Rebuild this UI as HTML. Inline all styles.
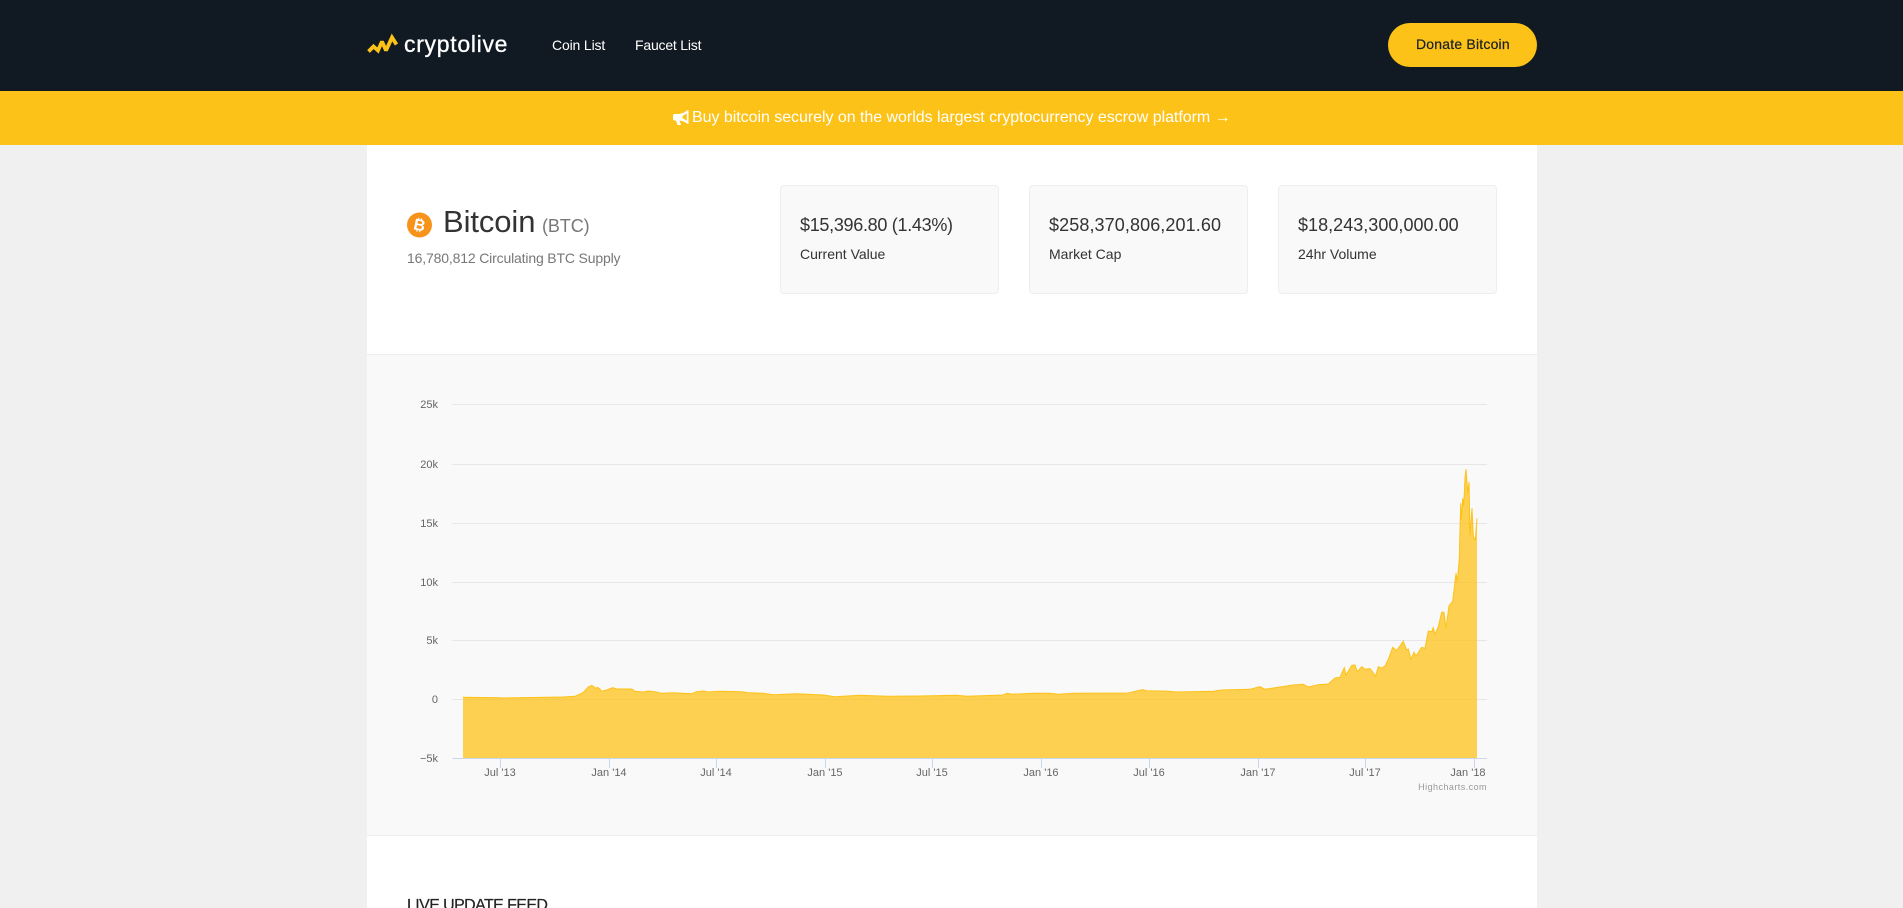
<!DOCTYPE html>
<html lang="en">
<head>
<meta charset="utf-8">
<title>Bitcoin (BTC) - cryptolive</title>
<style>
html,body{margin:0;padding:0;width:1903px;height:908px;overflow:hidden;background:#f0f0f0;font-family:"Liberation Sans",sans-serif;color:#333}
a{color:inherit;text-decoration:none}
#page{position:relative;width:1903px;height:908px;overflow:hidden;contain:paint}
.t{position:absolute;white-space:nowrap;line-height:1}
header{position:absolute;left:0;top:0;width:1903px;height:91px;background:#111a22}
.btn{position:absolute;left:1388px;top:23px;width:149px;height:44px;border-radius:22px;background:#fdc218}
.banner{position:absolute;left:0;top:91px;width:1903px;height:54px;background:#fdc218}
.panel{position:absolute;left:367px;top:145px;width:1170px;height:763px;background:#fff}
.chartwrap{position:absolute;left:367px;top:354px;width:1170px;height:482px;background:#f9f9f9;border-top:1px solid #eee;border-bottom:1px solid #eee;box-sizing:border-box}
.card{position:absolute;top:185px;width:219px;height:109px;box-sizing:border-box;background:#f9f9f9;border:1px solid #eee;border-radius:4px}
</style>
</head>
<body>
<div id="page">
<header>
<svg style="position:absolute;left:362px;top:28px" width="40" height="30" viewBox="362 28 40 30"><path d="M368.5 51.5L373.5 46.5L378 50.5L382 41.5L386 50.5L392 37.5L396.5 44.5" fill="none" stroke="#fdc218" stroke-width="3.8" stroke-linejoin="miter" stroke-miterlimit="2.2" stroke-linecap="butt"/></svg>
<a class="t" style="left:404px;top:33px;font-size:23px;color:#fff;letter-spacing:.7px;-webkit-text-stroke:.3px #fff">cryptolive</a>
<a class="t" style="left:552px;top:38px;font-size:14px;color:#fff;letter-spacing:-.15px">Coin List</a>
<a class="t" style="left:635px;top:38px;font-size:14px;color:#fff;letter-spacing:-.2px">Faucet List</a>
<a class="btn"></a>
<span class="t" style="left:1416px;top:37px;font-size:14px;color:#1a2026;letter-spacing:.2px;-webkit-text-stroke:.2px #1a2026">Donate Bitcoin</span>
</header>
<div class="banner">
<svg style="position:absolute;left:673px;top:18px" width="17" height="17" viewBox="0 0 17 17"><path d="M15.5 1L14 1.5C11 4 8 5 4.5 5H1.5C.7 5 0 5.7 0 6.5V10C0 10.8.7 11.5 1.5 11.5H3L4.5 16H8L6.5 11.6C9.5 11.8 12 12.8 14 14.6L15.5 15ZM13.8 4.2V11.8C12.5 10.7 11 9.8 9.5 9.2V6.8C11 6.2 12.5 5.3 13.8 4.2Z" fill="#fff" fill-rule="evenodd"/></svg>
<a class="t" style="left:692px;top:19px;font-size:16px;color:#fff;letter-spacing:-.04px">Buy bitcoin securely on the worlds largest cryptocurrency escrow platform →</a>
</div>
<main>
<div class="panel"></div>
<svg style="position:absolute;left:406px;top:212px" width="27" height="27" viewBox="0 0 27 27"><circle cx="13.5" cy="13" r="12.5" fill="#f7931a"/><text x="13.5" y="18.5" font-family="Liberation Sans" font-size="16" font-weight="700" fill="#fff" text-anchor="middle" transform="rotate(12 13.5 13)">B</text><path d="M13 5.6L12.6 7.6M15.8 6.2L15.4 8.2M11.2 17.6L10.8 19.6M14 18.2L13.6 20.2" stroke="#fff" stroke-width="1.1"/></svg>
<h1 class="t" style="margin:0;left:443px;top:206px;font-size:31px;font-weight:400;color:#333;letter-spacing:-.1px">Bitcoin</h1>
<span class="t" style="left:542px;top:217px;font-size:18px;color:#777;letter-spacing:-.1px">(BTC)</span>
<p class="t" style="margin:0;left:407px;top:251px;font-size:14px;color:#777;letter-spacing:-.16px">16,780,812 Circulating BTC Supply</p>
<div class="card" style="left:780px"></div>
<span class="t" style="left:800px;top:216px;font-size:18px;color:#333;letter-spacing:-.3px">$15,396.80 (1.43%)</span>
<span class="t" style="left:800px;top:247px;font-size:14px;color:#333;letter-spacing:0">Current Value</span>
<div class="card" style="left:1029px"></div>
<span class="t" style="left:1049px;top:216px;font-size:18px;color:#333;letter-spacing:.1px">$258,370,806,201.60</span>
<span class="t" style="left:1049px;top:247px;font-size:14px;color:#333;letter-spacing:0">Market Cap</span>
<div class="card" style="left:1278px"></div>
<span class="t" style="left:1298px;top:216px;font-size:18px;color:#333;letter-spacing:.03px">$18,243,300,000.00</span>
<span class="t" style="left:1298px;top:247px;font-size:14px;color:#333;letter-spacing:0">24hr Volume</span>
<div class="chartwrap"></div>
<svg style="position:absolute;left:367px;top:354px" width="1170" height="481" viewBox="367 354 1170 481" font-family="Liberation Sans">
<g stroke="#e6e6e6" stroke-width="1">
<path d="M452.5 404.5H1487M452.5 464.5H1487M452.5 523.5H1487M452.5 582.5H1487M452.5 640.5H1487M452.5 699.5H1487"/>
</g>
<path fill="#fdc218" fill-opacity=".75" d="M463 758V697.3L500 697.7L503 698L563 697L575 696.3L583 692.7L588 687.3L591.7 685.3L594 686.7L595.7 688.7L597 687.3L600 688.7L601.3 691.3L606.7 690L612.7 687.7L616.7 689L631.7 689L635 691.3L643.3 692L648.3 691L655 691.7L661.7 693.3L673.3 692.7L691.7 693.7L696.7 691.7L703.3 691L708.3 692L718.3 691.3L741.7 691.7L748.3 692.7L763.3 693.3L773.3 694.7L796.7 693.7L823.3 695L835 696.7L860 695.3L886.7 696.3L920 696L956.7 695.3L966.7 696.3L1003.3 695L1007.3 693.3L1011.7 694.3L1033.3 693.3L1050 693.3L1058.3 694.3L1073.3 693.3L1128.3 693L1135 691.3L1142.7 689.7L1146.7 690.7L1168.3 691.3L1176.7 692L1213.3 691.3L1221.7 690L1250 689.3L1260 686.7L1265 689.3L1280 687L1293.3 685L1303.3 684.3L1308.3 687L1318.3 684.7L1328.3 684L1335 678L1340 677.3L1344.3 667.7L1346 675L1351.7 665.3L1355 665L1357.3 671.7L1361.7 666.7L1365 669.3L1370 668.7L1375.7 676L1378.3 666.7L1381.7 668L1385 666L1388.3 659.3L1392.7 647.3L1396.7 650.7L1399 647.3L1403.3 641.3L1406.7 650L1408.3 649L1411 659.3L1414 652.3L1416 656L1421.7 647.3L1425 648.3L1428.3 631L1431.7 631.7L1433.3 627.7L1435 634.3L1438.3 626.7L1441.7 612.3L1444 612.3L1446 628.3L1449 605.7L1452.7 601.3L1456 573.3L1457.3 581.7L1459.3 558.3L1460.7 503.3L1461.3 520L1462.7 498.3L1463.7 506L1465 478L1466 469.3L1467.7 493L1469 482L1470 535L1472 508.3L1473.3 536.7L1475.3 540L1477 518.3V758Z"/>
<path fill="none" stroke="#fdc218" stroke-width="1" d="M463 697.3L500 697.7L503 698L563 697L575 696.3L583 692.7L588 687.3L591.7 685.3L594 686.7L595.7 688.7L597 687.3L600 688.7L601.3 691.3L606.7 690L612.7 687.7L616.7 689L631.7 689L635 691.3L643.3 692L648.3 691L655 691.7L661.7 693.3L673.3 692.7L691.7 693.7L696.7 691.7L703.3 691L708.3 692L718.3 691.3L741.7 691.7L748.3 692.7L763.3 693.3L773.3 694.7L796.7 693.7L823.3 695L835 696.7L860 695.3L886.7 696.3L920 696L956.7 695.3L966.7 696.3L1003.3 695L1007.3 693.3L1011.7 694.3L1033.3 693.3L1050 693.3L1058.3 694.3L1073.3 693.3L1128.3 693L1135 691.3L1142.7 689.7L1146.7 690.7L1168.3 691.3L1176.7 692L1213.3 691.3L1221.7 690L1250 689.3L1260 686.7L1265 689.3L1280 687L1293.3 685L1303.3 684.3L1308.3 687L1318.3 684.7L1328.3 684L1335 678L1340 677.3L1344.3 667.7L1346 675L1351.7 665.3L1355 665L1357.3 671.7L1361.7 666.7L1365 669.3L1370 668.7L1375.7 676L1378.3 666.7L1381.7 668L1385 666L1388.3 659.3L1392.7 647.3L1396.7 650.7L1399 647.3L1403.3 641.3L1406.7 650L1408.3 649L1411 659.3L1414 652.3L1416 656L1421.7 647.3L1425 648.3L1428.3 631L1431.7 631.7L1433.3 627.7L1435 634.3L1438.3 626.7L1441.7 612.3L1444 612.3L1446 628.3L1449 605.7L1452.7 601.3L1456 573.3L1457.3 581.7L1459.3 558.3L1460.7 503.3L1461.3 520L1462.7 498.3L1463.7 506L1465 478L1466 469.3L1467.7 493L1469 482L1470 535L1472 508.3L1473.3 536.7L1475.3 540L1477 518.3"/>
<path stroke="#ccd6eb" stroke-width="1" fill="none" d="M452.5 758.5H1487M500.5 758V768M609.5 758V768M716.5 758V768M825.5 758V768M932.5 758V768M1041.5 758V768M1149.5 758V768M1258.5 758V768M1365.5 758V768M1474.5 758V768"/>
<g font-size="11" fill="#666" text-anchor="end">
<text x="438" y="408">25k</text><text x="438" y="468">20k</text><text x="438" y="527">15k</text><text x="438" y="586">10k</text><text x="438" y="644">5k</text><text x="438" y="703">0</text><text x="438" y="762">−5k</text>
</g>
<g font-size="11" fill="#666" text-anchor="middle">
<text x="500" y="776">Jul '13</text><text x="609" y="776">Jan '14</text><text x="716" y="776">Jul '14</text><text x="825" y="776">Jan '15</text><text x="932" y="776">Jul '15</text><text x="1041" y="776">Jan '16</text><text x="1149" y="776">Jul '16</text><text x="1258" y="776">Jan '17</text><text x="1365" y="776">Jul '17</text><text x="1468" y="776">Jan '18</text>
</g>
<text x="1487" y="790" font-size="9" fill="#999" text-anchor="end" letter-spacing=".45">Highcharts.com</text>
</svg>
<h2 class="t" style="margin:0;left:407px;top:898px;font-size:16px;font-weight:400;color:#222;letter-spacing:-.6px;-webkit-text-stroke:.2px #222">LIVE UPDATE FEED</h2>
</main>
</div>
</body>
</html>
